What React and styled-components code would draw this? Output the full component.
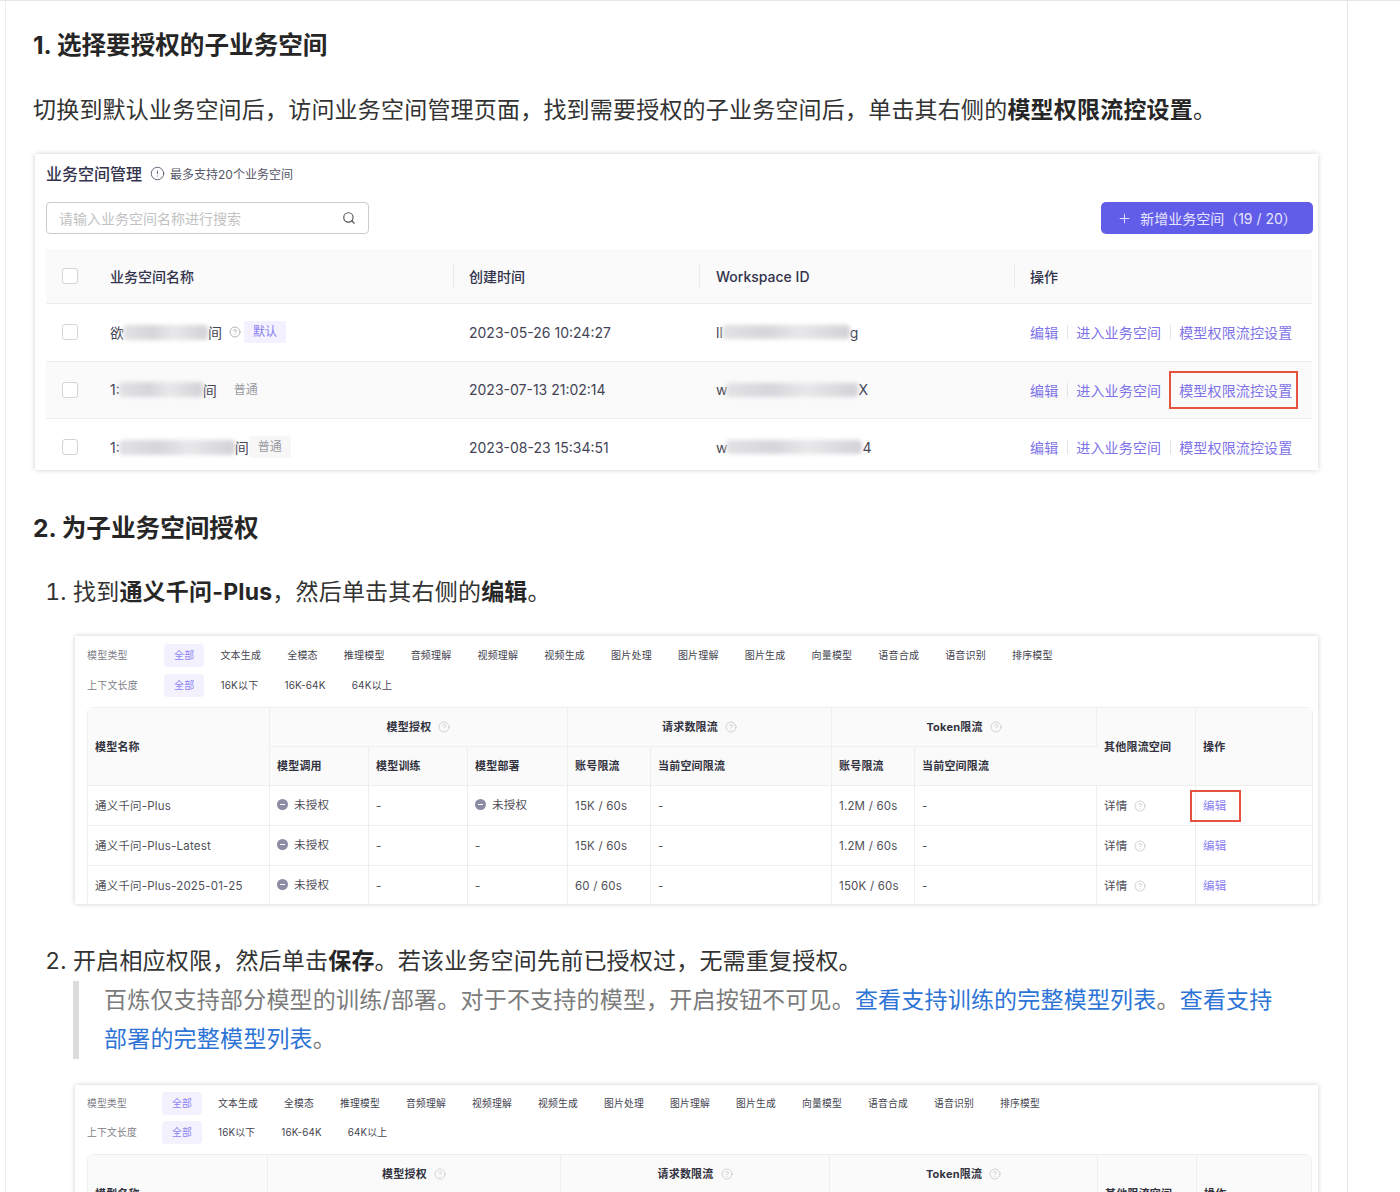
import React from "react";
import styled, { createGlobalStyle } from "styled-components";
import { CircleHelp, CircleAlert, Search, Plus } from "lucide-react";

const Global = createGlobalStyle`
  html, body { margin: 0; padding: 0; background: #fff; }
  body { font-family: Inter, "Noto Sans CJK SC", sans-serif; color: #333; }
  * { box-sizing: border-box; }
`;
const Page = styled.div`
  height: 1192px; overflow: hidden; border-top: 1px solid #e6e6e6; padding-left: 5px;
`;
const Article = styled.main`
  width: 1343px; height: 1192px; overflow: hidden; padding: 0 0 0 27px;
  border-left: 1px solid #ececec; border-right: 1px solid #e6e6e6;
`;
const Heading = styled.h2`
  margin: ${p => p.$top}px 0 0; font-size: 24.6px; line-height: 34px; font-weight: 700; color: #262626;
`;
const Para = styled.p`
  margin: 31px 0 0; font-size: 23px; line-height: 34px; letter-spacing: .2px; color: #333;
  strong { font-weight: 700; color: #262626; }
`;
const Card = styled.div`
  background: #fff; width: 1283px; margin: 27px 0 0 2px; height: 316px; overflow: hidden;
  box-shadow: 0 0 5px rgba(0,0,0,.2); padding: 0 5px 0 11px;
`;
const TitleRow = styled.div`display: flex; align-items: center; height: 38px; color: #33334d;`;
const Title = styled.span`font-size: 16px; font-weight: 500; margin-right: 8px;`;
const Note = styled.span`display: flex; align-items: center; gap: 5px; font-size: 12px; color: #555566;`;
const Toolbar = styled.div`display: flex; justify-content: space-between; margin-top: 10px;`;
const SearchBox = styled.div`
  width: 323px; height: 32px; border: 1px solid #ccc; border-radius: 4px; padding: 0 12px;
  display: flex; align-items: center; justify-content: space-between; font-size: 14px; color: #c2c2c2;
  svg { color: #555; }
`;
const AddButton = styled.div`
  width: 212px; height: 32px; border-radius: 5px; background: #625de8; color: #e6e5ff; font-size: 14px;
  display: flex; align-items: center; justify-content: center; gap: 8px;
`;
const WsGrid = styled.div`
  display: grid; grid-template-columns: 407px 246px 315px 298px; margin-top: 15px;
`;
const Cell = styled.div`
  display: flex; align-items: center; height: ${p => p.$h}px; font-size: 14px; color: #444455;
  background: ${p => p.$alt ? "#fafafa" : "transparent"}; padding-left: ${p => p.$pad}px;
  border-bottom: 1px solid #ededed;
`;
const HeadCell = styled(Cell)`
  background: #fafafa; font-weight: 500; color: #33334d; position: relative;
  ${p => p.$sep && `&::before { content: ""; position: absolute; left: 0; top: 15px; bottom: 15px; width: 1px; background: #ececec; }`}
`;
const Check = styled.span`
  width: 16px; height: 16px; border: 1px solid #d4d4d8; border-radius: 3px; background: #fff; margin-right: 32px; flex: none;
`;
const Blur = styled.span`
  display: inline-block; flex: none; width: ${p => p.$w}px; height: ${p => p.$h || 15}px; margin-left: ${p => p.$ml || 0}px; margin-right: ${p => p.$mr || 0}px;
  background: linear-gradient(90deg, #e2e2e5, #d6d6da 35%, #e8e8ea 60%, #d2d2d6); filter: blur(2px); border-radius: 4px;
`;
const Tag = styled.span`
  font-size: 12px; padding: 4px 9px; line-height: 14px; margin-left: ${p => p.$ml}px; border-radius: 2px;
  color: ${p => p.$def ? "#8a7ff0" : "#9a9aa2"}; background: ${p => p.$bg ? (p.$def ? "#f3f1ff" : "#f7f7f8") : "transparent"};
`;
const Hint = styled(CircleHelp)`margin-left: ${p => p.$ml || 0}px; color: #b6b6ba; flex: none;`;
const Links = styled.div`display: flex; align-items: center; font-size: 14px; color: #7d72e8; letter-spacing: .15px;`;
const Link = styled.span`
  position: relative;
  ${p => p.$boxed && `&::after { content: ""; position: absolute; left: -10px; right: -6px; top: -9px; bottom: -9px; border: 2.5px solid #e5533f; }`}
`;
const Divider = styled.i`width: 1px; height: 14px; background: #e4e4e8; margin: 0 8.5px;`;
const ListBlock = styled.ol`margin: 0; padding: 0 0 0 40px; font-size: 23px;`;
const Item = styled.li`
  margin-top: ${p => p.$top}px; line-height: 34px; letter-spacing: .2px; color: #333;
  strong { font-weight: 700; color: #262626; }
`;
const Quote = styled.blockquote`
  margin: 3px 0 0; padding: 0 30px 0 25px; width: 1242px; border-left: 6px solid #dcdcdc;
  font-size: 23px; line-height: 39px; color: #7b7b7b; letter-spacing: .2px;
  a { color: #2d74d6; text-decoration: none; }
`;
const ModelCardBox = styled.div`
  background: #fff; width: 1243px; margin-top: ${p => p.$top}px; margin-left: 2px; height: ${p => p.$height}px; overflow: hidden;
  box-shadow: 0 0 5px rgba(0,0,0,.2); padding: 4px 6px 0 12px;
`;
const FilterRow = styled.div`display: flex; align-items: center; height: ${p => p.$h}px; font-size: ${p => p.$fs}px; color: #444;`;
const FilterLabel = styled.span`width: ${p => p.$w}px; color: #808088; flex: none;`;
const FilterOption = styled.span`
  padding: 5px 10px; margin-right: 6px; line-height: 13px; border-radius: 4px; flex: none;
  color: ${p => p.$on ? "#8e84f2" : "#44444f"}; background: ${p => p.$on ? "#f2f1fd" : "transparent"};
`;
const ModelTable = styled.table`
  width: ${p => p.$w}px; table-layout: fixed; border-collapse: separate; border-spacing: 0; margin-top: ${p => p.$top}px;
  border: 1px solid #eeeeee; border-bottom: 0; border-radius: 6px 6px 0 0; font-size: 11.5px; color: #4f4f58;
  th, td { padding: 0 7px; border-right: 1px solid #eeeeee; border-bottom: 1px solid #efefef; text-align: left; font-weight: 500; }
  th:last-child, td:last-child { border-right: 0; }
  th { background: #fafafa; color: #33333f; font-weight: 700; height: 39px; font-size: 11px; }
  td { height: 40px; font-weight: 400; }
`;
const GroupHead = styled.th`
  && { text-align: center; }
  svg { margin-left: 7px; vertical-align: -2px; color: #b8b8bc; }
`;
const Status = styled.span`
  display: inline-flex; align-items: center; gap: 6px;
  &::before { content: ""; width: 11px; height: 11px; border-radius: 50%; background: radial-gradient(#fff 0 0) center / 5px 1.4px no-repeat, #8b8ba3; }
`;
const EditLink = styled.span`
  position: relative; color: #8a7ff0;
  ${p => p.$boxed && `&::after { content: ""; position: absolute; left: -13px; right: -15px; top: -9px; bottom: -9px; border: 2px solid #e5533f; }`}
`;

const wsRows = [
  { first: "欲", w: 85, last: "间", tail: <><Hint size={12} $ml={7} /><Tag $def $bg $ml={3}>默认</Tag></>, date: "2023-05-26 10:24:27", id: "ll", idw: 128, idEnd: "g" },
  { first: "1:", w: 84, last: "间", tail: <Tag $ml={8}>普通</Tag>, date: "2023-07-13 21:02:14", id: "w", idw: 132, idEnd: "X", alt: true, boxed: true },
  { first: "1:", w: 116, last: "间", tail: <Tag $bg $ml={0}>普通</Tag>, date: "2023-08-23 15:34:51", id: "w", idw: 136, idEnd: "4" },
];

const types = ["文本生成", "全模态", "推理模型", "音频理解", "视频理解", "视频生成", "图片处理", "图片理解", "图片生成", "向量模型", "语音合成", "语音识别", "排序模型"];
const lengths = ["16K以下", "16K-64K", "64K以上"];
const models = [
  { name: "通义千问-Plus", deploy: true, req: "15K / 60s", tok: "1.2M / 60s", boxed: true },
  { name: "通义千问-Plus-Latest", req: "15K / 60s", tok: "1.2M / 60s" },
  { name: "通义千问-Plus-2025-01-25", req: "60 / 60s", tok: "150K / 60s" },
];

function ModelCard({ top, height, cols, fs, labelW, rowH, tableTop, tableW }) {
  return (
    <ModelCardBox $top={top} $height={height}>
      <FilterRow $h={rowH} $fs={fs}>
        <FilterLabel $w={labelW}>模型类型</FilterLabel>
        <FilterOption $on>全部</FilterOption>
        {types.map(t => <FilterOption key={t}>{t}</FilterOption>)}
      </FilterRow>
      <FilterRow $h={rowH} $fs={fs}>
        <FilterLabel $w={labelW}>上下文长度</FilterLabel>
        <FilterOption $on>全部</FilterOption>
        {lengths.map(t => <FilterOption key={t}>{t}</FilterOption>)}
      </FilterRow>
      <ModelTable $top={tableTop} $w={tableW}>
        <colgroup>{cols.map((c, i) => <col key={i} style={{ width: c }} />)}</colgroup>
        <thead>
          <tr>
            <th rowSpan={2}>模型名称</th>
            <GroupHead colSpan={3}>模型授权<CircleHelp size={12} strokeWidth={1.2} /></GroupHead>
            <GroupHead colSpan={2}>请求数限流<CircleHelp size={12} strokeWidth={1.2} /></GroupHead>
            <GroupHead colSpan={2}>Token限流<CircleHelp size={12} strokeWidth={1.2} /></GroupHead>
            <th rowSpan={2}>其他限流空间</th>
            <th rowSpan={2}>操作</th>
          </tr>
          <tr>
            <th>模型调用</th><th>模型训练</th><th>模型部署</th>
            <th>账号限流</th><th>当前空间限流</th>
            <th>账号限流</th><th>当前空间限流</th>
          </tr>
        </thead>
        <tbody>
          {models.map(m => (
            <tr key={m.name}>
              <td>{m.name}</td>
              <td><Status>未授权</Status></td>
              <td>-</td>
              <td>{m.deploy ? <Status>未授权</Status> : "-"}</td>
              <td>{m.req}</td>
              <td>-</td>
              <td>{m.tok}</td>
              <td>-</td>
              <td>详情<Hint size={12} strokeWidth={1.2} $ml={7} style={{ verticalAlign: -2 }} /></td>
              <td><EditLink $boxed={m.boxed}>编辑</EditLink></td>
            </tr>
          ))}
        </tbody>
      </ModelTable>
    </ModelCardBox>
  );
}

export default function App() {
  return (
    <Page>
      <Global />
      <Article>
        <Heading $top={27}>1. 选择要授权的子业务空间</Heading>
        <Para>切换到默认业务空间后，访问业务空间管理页面，找到需要授权的子业务空间后，单击其右侧的<strong>模型权限流控设置</strong>。</Para>
        <Card>
          <TitleRow>
            <Title>业务空间管理</Title>
            <Note><CircleAlert size={15} strokeWidth={1.4} />最多支持20个业务空间</Note>
          </TitleRow>
          <Toolbar>
            <SearchBox>请输入业务空间名称进行搜索<Search size={14} /></SearchBox>
            <AddButton><Plus size={15} strokeWidth={1.5} />新增业务空间（19 / 20）</AddButton>
          </Toolbar>
          <WsGrid>
            <HeadCell $h={55} $pad={16}><Check />业务空间名称</HeadCell>
            <HeadCell $h={55} $pad={16} $sep>创建时间</HeadCell>
            <HeadCell $h={55} $pad={17} $sep>Workspace ID</HeadCell>
            <HeadCell $h={55} $pad={16} $sep>操作</HeadCell>
            {wsRows.map(r => (
              <React.Fragment key={r.date}>
                <Cell $h={57.5} $pad={16} $alt={r.alt}>
                  <Check />{r.first}<Blur $w={r.w} $ml={-1} />{r.last}{r.tail}
                </Cell>
                <Cell $h={57.5} $pad={16} $alt={r.alt}>{r.date}</Cell>
                <Cell $h={57.5} $pad={17} $alt={r.alt}>{r.id}<Blur $w={r.idw} $h={14} $ml={-1} />{r.idEnd}</Cell>
                <Cell $h={57.5} $pad={16} $alt={r.alt}>
                  <Links>
                    <Link>编辑</Link><Divider />
                    <Link>进入业务空间</Link><Divider />
                    <Link $boxed={r.boxed}>模型权限流控设置</Link>
                  </Links>
                </Cell>
              </React.Fragment>
            ))}
          </WsGrid>
        </Card>
        <Heading $top={41}>2. 为子业务空间授权</Heading>
        <ListBlock>
          <Item $top={30}>
            找到<strong>通义千问-Plus</strong>，然后单击其右侧的<strong>编辑</strong>。
            <ModelCard top={27} height={268} cols={[182, 99, 99, 100, 83, 181, 83, 182, 99, 116]} fs={10} labelW={77} rowH={30} tableTop={7} tableW={1225} />
          </Item>
          <Item $top={40}>
            开启相应权限，然后单击<strong>保存</strong>。若该业务空间先前已授权过，无需重复授权。
            <Quote>百炼仅支持部分模型的训练/部署。对于不支持的模型，开启按钮不可见。<a>查看支持训练的完整模型列表</a>。<a>查看支持部署的完整模型列表</a>。</Quote>
            <ModelCard top={26} height={120} cols={[180, 97, 98, 98, 83, 186, 83, 185, 99, 114]} fs={9.8} labelW={75} rowH={29} tableTop={7} tableW={1223} />
          </Item>
        </ListBlock>
      </Article>
    </Page>
  );
}
